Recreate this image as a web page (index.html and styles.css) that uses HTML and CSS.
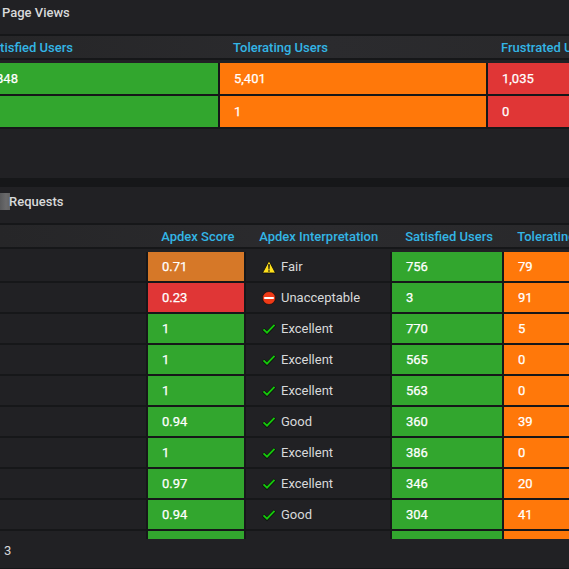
FILE: index.html
```
<!DOCTYPE html>
<html lang="en">
<head>
<meta charset="utf-8">
<title>Apdex</title>
<link rel="stylesheet" href="styles.css">
</head>
<body>
<svg class="defs" aria-hidden="true">
  <symbol id="warn" viewBox="0 0 14 14"><path d="M7 .8 13.5 13H.5Z" fill="#ffe01c" stroke="#0b0b0b" stroke-width=".8" stroke-linejoin="round"/><path d="M6.1 4.3h1.8L7.5 9.5h-1Z" fill="#161616"/><path d="M6.3 10.3h1.4v1.5H6.3Z" fill="#161616"/></symbol>
  <symbol id="stop" viewBox="0 0 14 14"><circle cx="7" cy="7" r="6.5" fill="#f03a17" stroke="#16100f" stroke-width=".7"/><rect x="2.2" y="6" width="9.6" height="2" fill="#fff"/></symbol>
  <symbol id="check" viewBox="0 0 14 14"><path d="M1.2 7.2 5 10.9 12.9 2.7" fill="none" stroke="#0c160c" stroke-width="3.4"/><path d="M1.5 7.4 5 10.7 12.5 2.9" fill="none" stroke="#16c60c" stroke-width="1.9"/></symbol>
</svg>
<section class="panel views">
  <h2 class="title">Page Views</h2>
  <div class="row head"><div class="clipped">Satisfied Users</div><div>Tolerating Users</div><div>Frustrated Users</div></div>
  <div class="body">
    <div class="row"><div class="cell green clipped">5,848</div><div class="cell orange">5,401</div><div class="cell red">1,035</div></div>
    <div class="row"><div class="cell green"></div><div class="cell orange">1</div><div class="cell red">0</div></div>
  </div>
</section>
<section class="panel requests">
  <h2 class="title"><span class="redacted"></span>Requests</h2>
  <div class="row head"><div></div><div>Apdex Score</div><div>Apdex Interpretation</div><div>Satisfied Users</div><div>Tolerating Users</div></div>
  <div class="body">
    <div class="row"><div class="cell"></div><div class="cell amber">0.71</div><div class="cell note"><svg><use href="#warn"/></svg>Fair</div><div class="cell green">756</div><div class="cell orange">79</div></div>
    <div class="row"><div class="cell"></div><div class="cell red">0.23</div><div class="cell note"><svg><use href="#stop"/></svg>Unacceptable</div><div class="cell green">3</div><div class="cell orange">91</div></div>
    <div class="row"><div class="cell"></div><div class="cell green">1</div><div class="cell note"><svg><use href="#check"/></svg>Excellent</div><div class="cell green">770</div><div class="cell orange">5</div></div>
    <div class="row"><div class="cell"></div><div class="cell green">1</div><div class="cell note"><svg><use href="#check"/></svg>Excellent</div><div class="cell green">565</div><div class="cell orange">0</div></div>
    <div class="row"><div class="cell"></div><div class="cell green">1</div><div class="cell note"><svg><use href="#check"/></svg>Excellent</div><div class="cell green">563</div><div class="cell orange">0</div></div>
    <div class="row"><div class="cell"></div><div class="cell green">0.94</div><div class="cell note"><svg><use href="#check"/></svg>Good</div><div class="cell green">360</div><div class="cell orange">39</div></div>
    <div class="row"><div class="cell"></div><div class="cell green">1</div><div class="cell note"><svg><use href="#check"/></svg>Excellent</div><div class="cell green">386</div><div class="cell orange">0</div></div>
    <div class="row"><div class="cell"></div><div class="cell green">0.97</div><div class="cell note"><svg><use href="#check"/></svg>Excellent</div><div class="cell green">346</div><div class="cell orange">20</div></div>
    <div class="row"><div class="cell"></div><div class="cell green">0.94</div><div class="cell note"><svg><use href="#check"/></svg>Good</div><div class="cell green">304</div><div class="cell orange">41</div></div>
    <div class="row"><div class="cell"></div><div class="cell green"></div><div class="cell"></div><div class="cell green"></div><div class="cell orange"></div></div>
  </div>
  <div class="pager">3</div>
</section>
</body>
</html>
```
FILE: styles.css
```
* { box-sizing: border-box; }
body {
  margin: 0;
  width: 569px;
  height: 569px;
  overflow: hidden;
  display: flex;
  flex-direction: column;
  gap: 9px;
  background: #161719;
  color: #d8d9da;
  font: 400 13px/19px Roboto, sans-serif;
}
.defs { display: none; }
.panel { background: #212124; overflow: hidden; flex: none; }
.views { height: 178px; }
.requests { height: 381px; }
.title {
  display: flex;
  margin: 0;
  padding: 3px 0 0 2px;
  height: 34px;
  font-size: 13px;
  font-weight: 500;
  line-height: 19px;
}
.requests .title { height: 36px; padding: 5px 0 0; }
.redacted {
  width: 10px;
  height: 17px;
  margin: 1px -1px 0 0;
  background: linear-gradient(90deg, #58595b, #6a6a6b 60%, #626263);
}
.row { display: grid; width: max-content; column-gap: 2px; }
.views .row { grid-template-columns: 218px 266px 160px; }
.requests .row { grid-template-columns: 146px 96px 144px 110px 130px; }
.head {
  height: 26px;
  border: solid #161719;
  border-width: 2px 0;
  background: linear-gradient(90deg, #262628, #2b2b2e 50%, #28282a);
  color: #33b5e5;
  font-weight: 500;
  line-height: 23px;
  white-space: nowrap;
}
.head > div { padding-left: 13px; }
.requests .head > div { padding-left: 13.2px; }
.body { margin-top: 3px; overflow: hidden; }
.body .row { background: #161719; padding-bottom: 2px; }
.requests .body { height: 287px; }
.cell { height: 29px; padding-left: 14px; line-height: 29px; background: #212124; white-space: nowrap; }
.views .cell { height: 31px; line-height: 31px; }
.green, .orange, .red, .amber { color: #fff; -webkit-text-stroke: .25px #fff; }
.green { background: #32a62e; }
.orange { background: #ff780a; }
.red { background: #e03636; }
.amber { background: #d67828; }
.row .clipped { display: flex; justify-content: flex-end; padding: 0 145px 0 0; }
.body .row .clipped { padding-right: 200px; }
.note { display: flex; align-items: center; gap: 5px; padding-left: 16px; }
.note svg { width: 14px; height: 14px; margin-top: 1px; flex: none; }
.pager { padding: 2px 0 0 4px; height: 29px; line-height: 19px; }
```
